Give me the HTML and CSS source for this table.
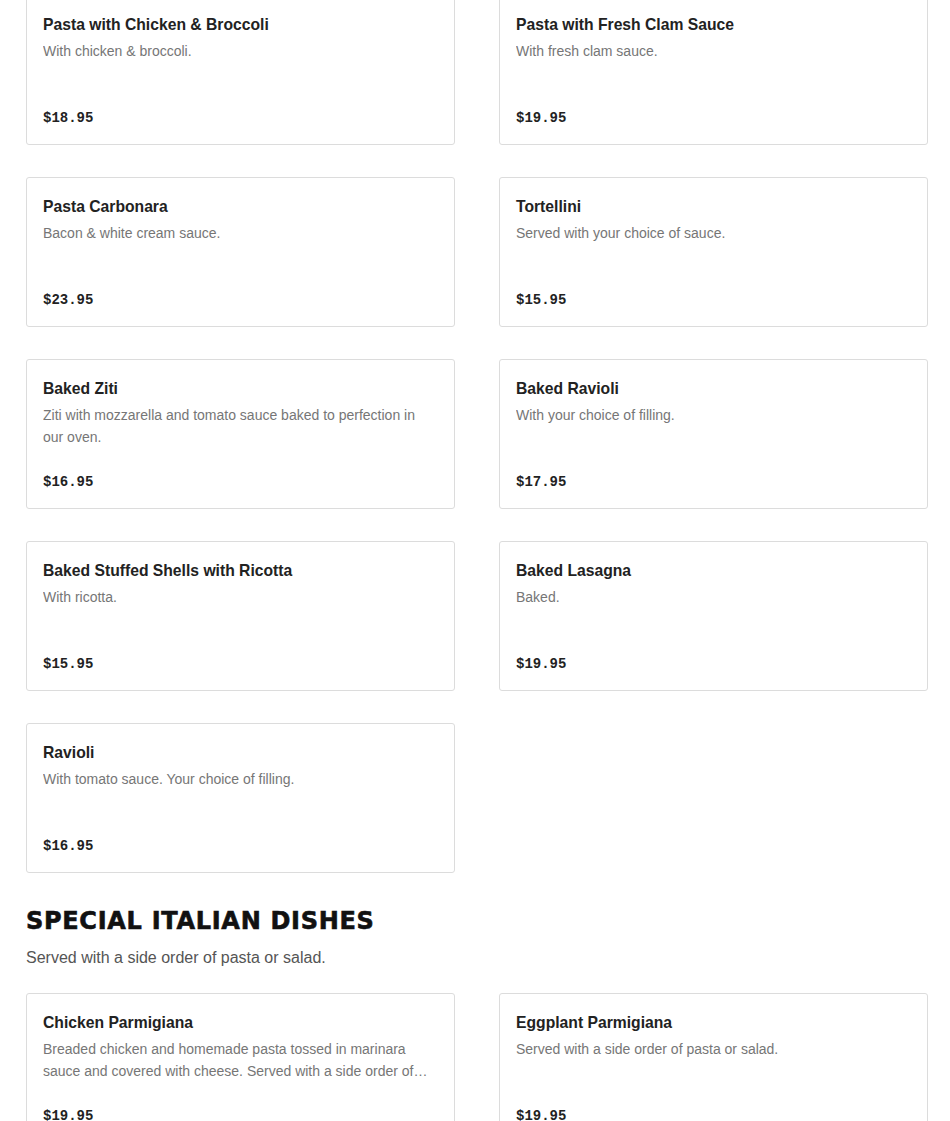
FILE: index.html
```html
<!DOCTYPE html>
<html>
<head>
<meta charset="utf-8">
<link rel="stylesheet" href="styles.css">
</head>
<body>
<div class="page">
  <div class="grid">
    <div class="card"><div class="title">Pasta with Chicken &amp; Broccoli</div><div class="desc">With chicken &amp; broccoli.</div><div class="price">$18.95</div></div>
    <div class="card"><div class="title">Pasta with Fresh Clam Sauce</div><div class="desc">With fresh clam sauce.</div><div class="price">$19.95</div></div>
    <div class="card"><div class="title">Pasta Carbonara</div><div class="desc">Bacon &amp; white cream sauce.</div><div class="price">$23.95</div></div>
    <div class="card"><div class="title">Tortellini</div><div class="desc">Served with your choice of sauce.</div><div class="price">$15.95</div></div>
    <div class="card"><div class="title">Baked Ziti</div><div class="desc">Ziti with mozzarella and tomato sauce baked to perfection in our oven.</div><div class="price">$16.95</div></div>
    <div class="card"><div class="title">Baked Ravioli</div><div class="desc">With your choice of filling.</div><div class="price">$17.95</div></div>
    <div class="card"><div class="title">Baked Stuffed Shells with Ricotta</div><div class="desc">With ricotta.</div><div class="price">$15.95</div></div>
    <div class="card"><div class="title">Baked Lasagna</div><div class="desc">Baked.</div><div class="price">$19.95</div></div>
    <div class="card"><div class="title">Ravioli</div><div class="desc">With tomato sauce. Your choice of filling.</div><div class="price">$16.95</div></div>
  </div>
  <section class="section">
    <h2 class="section-title">SPECIAL ITALIAN DISHES</h2>
    <p class="section-sub">Served with a side order of pasta or salad.</p>
  </section>
  <div class="grid">
    <div class="card"><div class="title">Chicken Parmigiana</div><div class="desc">Breaded chicken and homemade pasta tossed in marinara sauce and covered with cheese. Served with a side order of pasta or salad.</div><div class="price">$19.95</div></div>
    <div class="card"><div class="title">Eggplant Parmigiana</div><div class="desc">Served with a side order of pasta or salad.</div><div class="price">$19.95</div></div>
  </div>
</div>
</body>
</html>
```

FILE: styles.css
```css
html, body {
  margin: 0;
  padding: 0;
  background: #fff;
  overflow: hidden;
}
body {
  font-family: "Liberation Sans", Arial, sans-serif;
  color: #222;
}
.page {
  width: 902px;
  margin: -5px 0 0 26px;
}
.grid {
  display: grid;
  grid-template-columns: 1fr 1fr;
  column-gap: 44px;
  row-gap: 32px;
}
.card {
  border: 1px solid #dcdcdc;
  border-radius: 3px;
  padding: 18px 16px 15px 16px;
  display: flex;
  flex-direction: column;
}
.title {
  font-size: 15.7px;
  font-weight: 700;
  line-height: 22px;
  color: #222;
  margin-bottom: 4px;
}
.desc {
  font-size: 14px;
  line-height: 22px;
  color: #767676;
  height: 44px;
  overflow: hidden;
  display: -webkit-box;
  -webkit-line-clamp: 2;
  -webkit-box-orient: vertical;
}
.price {
  font-family: "Liberation Mono", "Courier New", monospace;
  font-weight: 700;
  font-size: 14px;
  line-height: 22px;
  color: #222;
  margin-top: 23px;
}
.section {
  padding: 32px 0 23px;
}
.section-title {
  margin: 0;
  font-family: "DejaVu Sans", sans-serif;
  font-weight: 900;
  font-size: 24px;
  letter-spacing: 0.7px;
  -webkit-text-stroke: 0.6px #111;
  line-height: 32px;
  color: #111;
}
.section-sub {
  margin: 9px 0 0;
  font-size: 16px;
  line-height: 24px;
  color: #555;
}
```
